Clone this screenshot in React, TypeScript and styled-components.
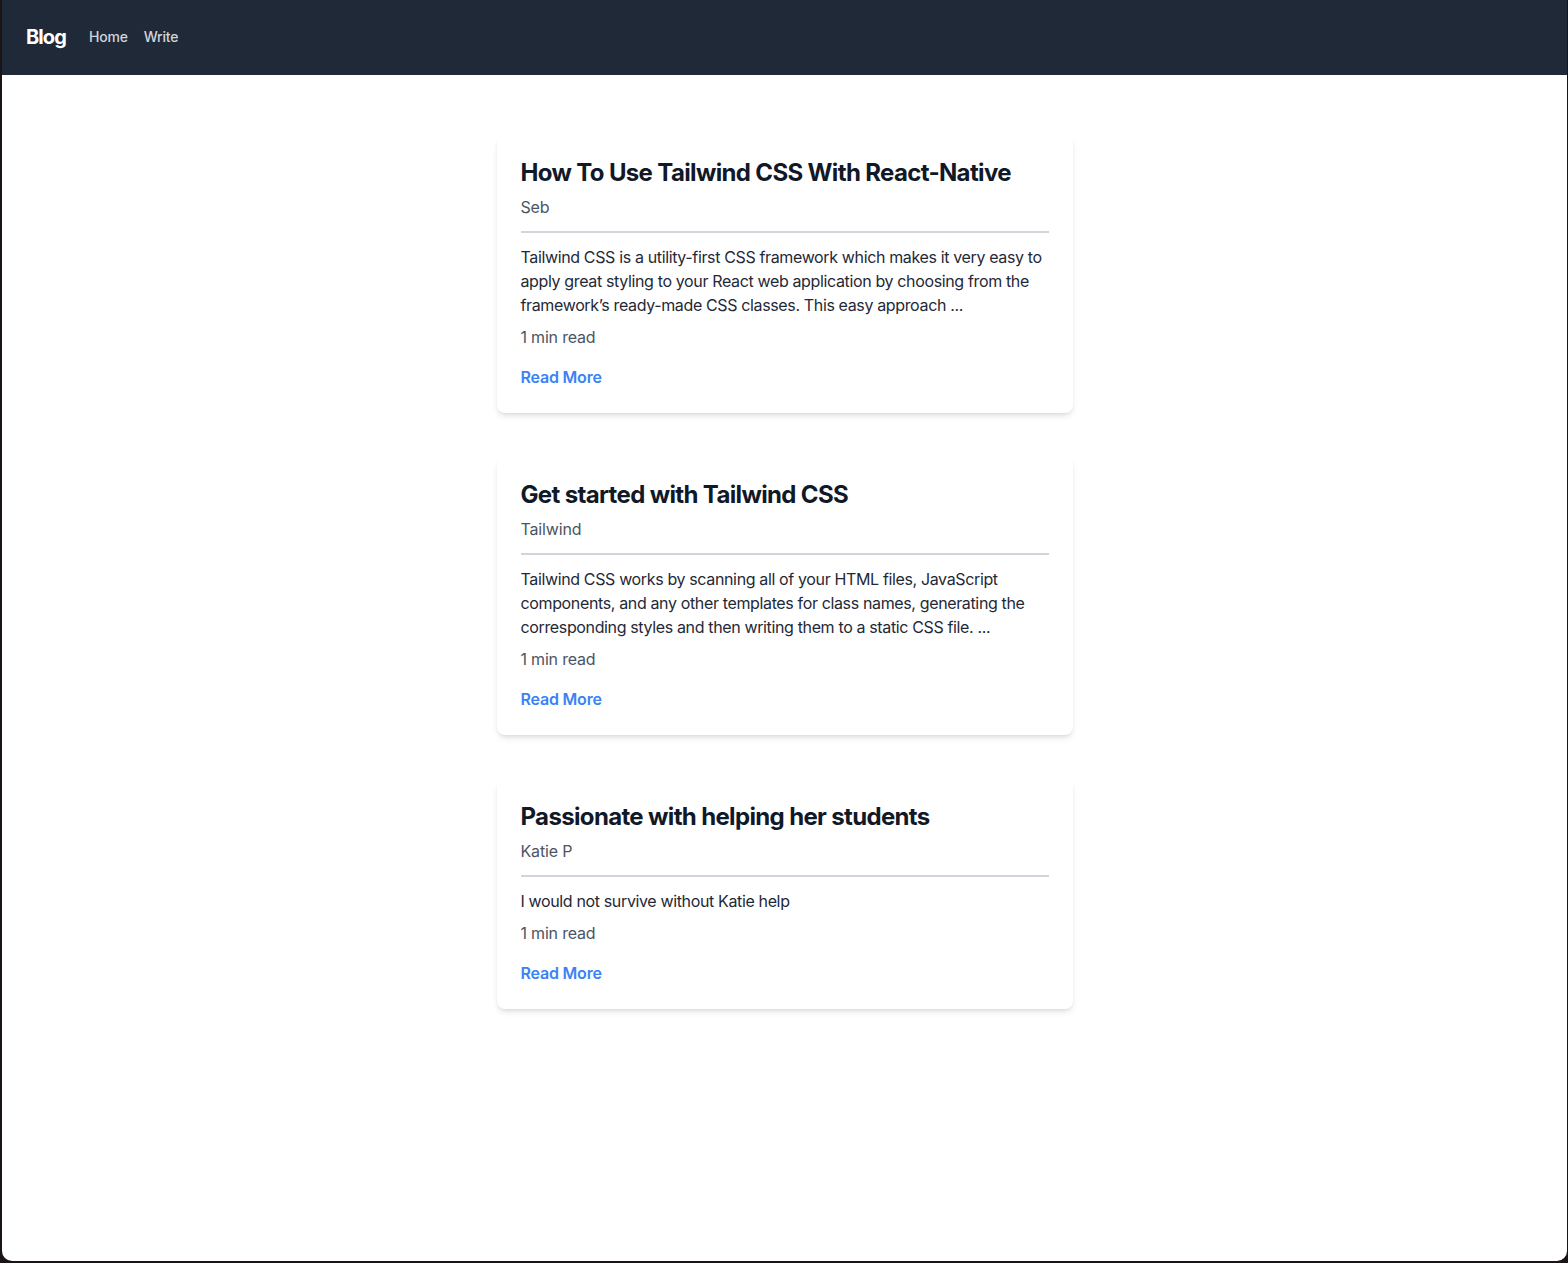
import React from 'react';
import styled, { createGlobalStyle } from 'styled-components';

const GlobalStyle = createGlobalStyle`
  html, body {
    margin: 0;
    padding: 0;
    background: #1a1414;
  }
  body {
    font-family: Inter, "Noto Sans", "Liberation Sans", sans-serif;
    -webkit-font-smoothing: antialiased;
  }
  * {
    box-sizing: border-box;
  }
`;

const Window = styled.div`
  margin: 0 1px 2px 2px;
  height: calc(100vh - 2px);
  background: #ffffff;
  border-radius: 0 0 10px 10px;
  overflow: hidden;
  display: flex;
  flex-direction: column;
`;

const NavBar = styled.nav`
  height: 75px;
  flex-shrink: 0;
  background-color: #1f2937;
  display: flex;
  align-items: center;
  padding: 0 24px 2px;
`;

const Brand = styled.a`
  color: #ffffff;
  font-size: 20px;
  font-weight: 700;
  letter-spacing: -0.9px;
  margin-right: 23px;
  text-decoration: none;
`;

const NavLink = styled.a`
  color: #d1d5db;
  font-size: 14px;
  font-weight: 500;
  letter-spacing: -0.2px;
  margin-right: 16px;
  text-decoration: none;
`;

const Main = styled.main`
  display: flex;
  flex-direction: column;
  align-items: center;
  padding-top: 60px;
  gap: 44px;
`;

const Card = styled.article`
  width: 576px;
  padding: 24px;
  background: #ffffff;
  border-radius: 8px;
  box-shadow: 0 4px 6px -1px rgba(0, 0, 0, 0.1), 0 2px 4px -2px rgba(0, 0, 0, 0.1);
`;

const Title = styled.h2`
  margin: 0;
  font-size: 24px;
  line-height: 28px;
  font-weight: 700;
  color: #111827;
  letter-spacing: -0.65px;
  padding-bottom: 4px;
`;

const Author = styled.p`
  margin: 4px 0 0;
  font-size: 16px;
  line-height: 24px;
  color: #4b5563;
  letter-spacing: -0.15px;
`;

const Divider = styled.hr`
  margin: 12px 0 0;
  border: none;
  border-top: 2px solid #d1d5db;
`;

const Body = styled.p`
  margin: 12px 0 0;
  font-size: 16px;
  line-height: 24px;
  color: #1f2937;
  letter-spacing: -0.36px;
`;

const ReadTime = styled.p`
  margin: 8px 0 0;
  font-size: 16px;
  line-height: 24px;
  color: #4b5563;
  letter-spacing: -0.2px;
`;

const ReadMore = styled.a`
  display: block;
  margin-top: 16px;
  font-size: 16px;
  line-height: 24px;
  font-weight: 600;
  color: #3b82f6;
  letter-spacing: -0.2px;
  text-decoration: none;
`;

interface Post {
  title: string;
  author: string;
  excerpt: string;
}

const posts: Post[] = [
  {
    title: 'How To Use Tailwind CSS With React-Native',
    author: 'Seb',
    excerpt:
      'Tailwind CSS is a utility-first CSS framework which makes it very easy to apply great styling to your React web application by choosing from the framework\u2019s ready-made CSS classes. This easy approach ...',
  },
  {
    title: 'Get started with Tailwind CSS',
    author: 'Tailwind',
    excerpt:
      'Tailwind CSS works by scanning all of your HTML files, JavaScript components, and any other templates for class names, generating the corresponding styles and then writing them to a static CSS file. ...',
  },
  {
    title: 'Passionate with helping her students',
    author: 'Katie P',
    excerpt: 'I would not survive without Katie help',
  },
];

function PostCard(props: { post: Post }) {
  return (
    <Card>
      <Title>{props.post.title}</Title>
      <Author>{props.post.author}</Author>
      <Divider />
      <Body>{props.post.excerpt}</Body>
      <ReadTime>1 min read</ReadTime>
      <ReadMore href="#">Read More</ReadMore>
    </Card>
  );
}

export default function App() {
  return (
    <>
      <GlobalStyle />
      <Window>
        <NavBar>
          <Brand href="#">Blog</Brand>
          <NavLink href="#">Home</NavLink>
          <NavLink href="#">Write</NavLink>
        </NavBar>
        <Main>
          {posts.map(post => (
            <PostCard key={post.title} post={post} />
          ))}
        </Main>
      </Window>
    </>
  );
}
